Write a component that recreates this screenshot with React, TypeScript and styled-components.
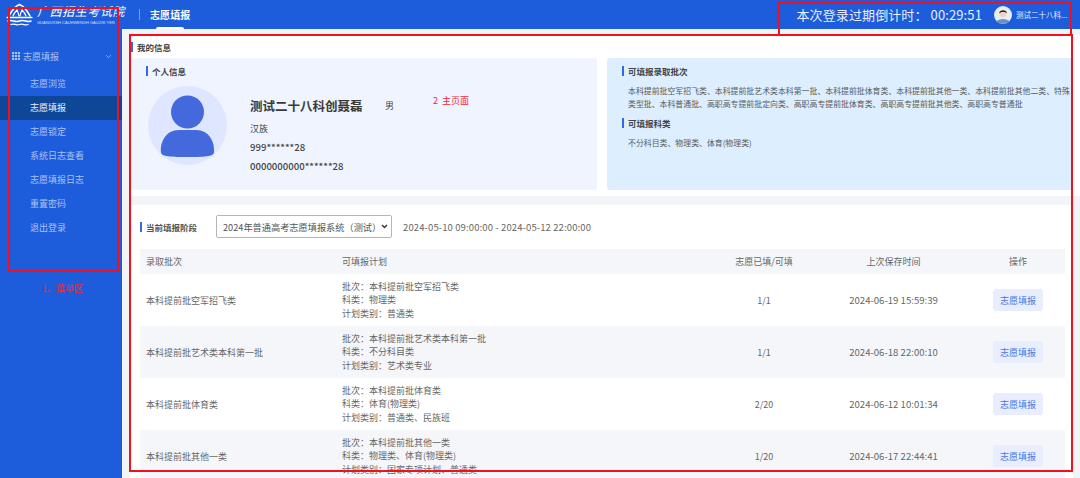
import React from 'react';
import styled, { createGlobalStyle } from 'styled-components';
import { ChevronDown } from 'lucide-react';

const GlobalStyle = createGlobalStyle`
  html, body {
    margin: 0;
    padding: 0;
    height: 478px;
    overflow: hidden;
    background: #fff;
  }
  * {
    box-sizing: border-box;
  }
`;

const selectArrow =
  "url(\"data:image/svg+xml,%3Csvg xmlns='http://www.w3.org/2000/svg' width='7' height='5' viewBox='0 0 7 5'%3E%3Cpath d='M1 1l2.5 2.5L6 1' fill='none' stroke='%23333' stroke-width='1.4'/%3E%3C/svg%3E\")";

const Page = styled.div`
  position: relative;
  width: 1080px;
  height: 478px;
  overflow: hidden;
  font-family: 'Noto Sans CJK SC', 'Noto Sans', sans-serif;
  font-size: 9px;
  color: #555;
`;

const Header = styled.header`
  display: flex;
  align-items: center;
  height: 29px;
  background: #1d5cdb;
  color: #fff;
`;

const Brand = styled.div`
  display: flex;
  align-items: center;
  width: 133px;
  padding-left: 6px;
  column-gap: 4px;
`;

const BrandText = styled.div`
  display: flex;
  flex-direction: column;
  line-height: 1;
`;

const BrandName = styled.div`
  font-family: 'Liberation Serif', 'Noto Sans CJK SC', serif;
  font-size: 12px;
  font-style: italic;
  letter-spacing: 0.6px;
  line-height: 16px;
  white-space: nowrap;
`;

const BrandEn = styled.div`
  font-family: 'Liberation Sans', sans-serif;
  font-size: 4px;
  line-height: 6px;
  opacity: 0.8;
  white-space: nowrap;
`;

const Divider = styled.div`
  width: 1px;
  height: 11px;
  margin: 0 10px 0 6px;
  background: rgba(255, 255, 255, 0.4);
`;

const HeaderTab = styled.div`
  position: relative;
  height: 29px;
  line-height: 29px;
  font-size: 10px;
  font-weight: 700;
  letter-spacing: 0.1px;

  &::after {
    content: '';
    position: absolute;
    left: 6px;
    right: 6px;
    bottom: 0;
    height: 2px;
    border-radius: 2px 2px 0 0;
    background: #fff;
  }
`;

const HeaderRight = styled.div`
  display: flex;
  align-items: center;
  margin-left: auto;
  padding-right: 10px;
`;

const Countdown = styled.div`
  font-size: 13px;
  letter-spacing: 0.11px;
  line-height: 29px;
  color: #e6eeff;
  white-space: nowrap;
`;

const UserName = styled.div`
  width: 54px;
  font-size: 7.5px;
  color: #e6eeff;
  white-space: nowrap;
`;

const HeaderAvatar = styled.svg`
  width: 18px;
  height: 18px;
  margin: 0 4px 0 12px;
`;

const Body = styled.div`
  display: flex;
  height: 449px;
`;

const Sidebar = styled.aside`
  flex: none;
  width: 122px;
  padding-top: 19px;
  background: #1d5cdb;
  color: #a9c3f5;
`;

const MenuGroup = styled.div`
  display: flex;
  align-items: center;
  height: 16px;
  padding: 0 9px 0 12px;
  margin-bottom: 8px;
  column-gap: 3px;
`;

const MenuGroupArrow = styled(ChevronDown)`
  margin-left: auto;
`;

const MenuItem = styled.div<{ $active?: boolean }>`
  height: 24px;
  line-height: 24px;
  padding-left: 30px;
  color: ${(props) => (props.$active ? '#e8f0ff' : '#a9c3f5')};
  background: ${(props) => (props.$active ? '#0e4698' : 'transparent')};
`;

const Content = styled.main`
  flex: 1;
  min-width: 0;
  padding: 6px 0 0 8px;
  background: #f2f4f8;
`;

const InfoCard = styled.section`
  height: 161px;
  padding-left: 1px;
  background: #fff;
`;

const CardTitleRow = styled.div`
  height: 23px;
  display: flex;
  align-items: center;
  padding-top: 1px;
`;

const Tick = styled.span<{ $height?: number }>`
  flex: none;
  width: 2px;
  height: ${(props) => props.$height || 10}px;
  background: #2f6be6;
`;

const CardTitle = styled.span`
  margin-left: 4px;
  font-size: 8.5px;
  font-weight: 700;
  color: #444;
`;

const Panels = styled.div`
  display: flex;
  width: 942px;
  column-gap: 10px;
  overflow: hidden;
`;

const PersonPanel = styled.div`
  flex: none;
  width: 466px;
  height: 132px;
  padding: 8px 0 0 15px;
  border-radius: 3px;
  background: #f0f4ff;
`;

const ScopePanel = styled.div`
  flex: 1;
  min-width: 0;
  height: 132px;
  padding: 8px 0 0 15px;
  border-radius: 3px 0 0 3px;
  background: #ddeeff;
`;

const PanelHeading = styled.div`
  display: flex;
  align-items: center;
  height: 10px;
  column-gap: 4px;
  font-size: 8.5px;
  font-weight: 700;
  color: #444;
`;

const PersonRow = styled.div`
  display: flex;
  margin-top: 10px;
  margin-left: 2px;
`;

const Portrait = styled.div`
  flex: none;
  width: 79px;
  height: 79px;
  border-radius: 50%;
  background: #dfe6ff;
`;

const PortraitIcon = styled.svg`
  display: block;
  width: 79px;
  height: 79px;
`;

const PersonText = styled.div`
  margin-left: 23px;
  padding-top: 7px;
`;

const NameRow = styled.div`
  display: flex;
  align-items: center;
  height: 24px;
  margin-bottom: 2px;
`;

const PersonName = styled.div`
  width: 135px;
  font-size: 12.5px;
  font-weight: 700;
  color: #3a3a3a;
  white-space: nowrap;
`;

const Gender = styled.div`
  font-size: 9px;
  color: #444;
`;

const PersonLine = styled.div<{ $strong?: boolean }>`
  height: 19px;
  line-height: 19px;
  font-size: ${(props) => (props.$strong ? 9.6 : 9)}px;
  font-weight: ${(props) => (props.$strong ? 500 : 400)};
  color: #444;
`;

const ScopeText = styled.p`
  width: 445px;
  margin: 8px 0 8px 6px;
  font-size: 7.9px;
  line-height: 13px;
  color: #5a5a5a;
`;

const PlanCard = styled.section`
  height: 273px;
  margin: 9px 7px 0 0;
  padding: 10px 8px 0 10px;
  background: #fff;
  overflow: hidden;
`;

const StageRow = styled.div`
  display: flex;
  align-items: center;
  height: 23px;
`;

const StageLabel = styled.span`
  width: 70px;
  margin-left: 4px;
  font-size: 8.5px;
  font-weight: 700;
  color: #555;
`;

const StageSelect = styled.select`
  appearance: none;
  width: 176px;
  height: 23px;
  padding: 0 0 0 6px;
  border: 1px solid #b5b5b5;
  border-radius: 2px;
  background: #fff ${selectArrow} no-repeat right 3px center;
  font-family: inherit;
  font-size: 9.2px;
  color: #555;
`;

const StageDates = styled.span`
  margin-left: 11px;
  font-size: 9.5px;
  letter-spacing: 0.12px;
  color: #666;
`;

const Table = styled.div`
  margin-top: 11px;
`;

const Row = styled.div<{ $stripe?: boolean; $head?: boolean }>`
  display: grid;
  grid-template-columns: 196px 370px 104px 155px 1fr;
  align-items: center;
  height: ${(props) => (props.$head ? 25 : 52)}px;
  padding-left: 6px;
  background: ${(props) => (props.$stripe ? '#f5f6fa' : '#fff')};
  color: #666;
`;

const PlanLines = styled.div`
  line-height: 13.6px;
`;

const CenterCell = styled.div`
  text-align: center;
  white-space: nowrap;
`;

const TimeCell = styled(CenterCell)`
  font-size: 9.6px;
`;

const FillButton = styled.button`
  display: block;
  width: 50px;
  height: 22px;
  margin: 0 auto;
  padding: 0;
  border: 0;
  border-radius: 3px;
  background: #e8eeff;
  font-family: inherit;
  font-size: 9px;
  color: #4a78e0;
`;

const RedBox = styled.div<{ $x: number; $y: number; $w: number; $h: number }>`
  position: absolute;
  left: ${(props) => props.$x}px;
  top: ${(props) => props.$y}px;
  width: ${(props) => props.$w}px;
  height: ${(props) => props.$h}px;
  border: 2px solid #f01020;
  pointer-events: none;
`;

const RedNote = styled.div<{ $x: number; $y: number }>`
  position: absolute;
  left: ${(props) => props.$x}px;
  top: ${(props) => props.$y}px;
  font-size: 9px;
  line-height: 12px;
  color: #ef2b3c;
  white-space: pre;
`;

const menu = ['志愿浏览', '志愿填报', '志愿锁定', '系统日志查看', '志愿填报日志', '重置密码', '退出登录'];

const rows = [
  {
    batch: '本科提前批空军招飞类',
    plan: ['批次：本科提前批空军招飞类', '科类：物理类', '计划类别：普通类'],
    count: '1/1',
    saved: '2024-06-19 15:59:39',
  },
  {
    batch: '本科提前批艺术类本科第一批',
    plan: ['批次：本科提前批艺术类本科第一批', '科类：不分科目类', '计划类别：艺术类专业'],
    count: '1/1',
    saved: '2024-06-18 22:00:10',
  },
  {
    batch: '本科提前批体育类',
    plan: ['批次：本科提前批体育类', '科类：体育(物理类)', '计划类别：普通类、民族班'],
    count: '2/20',
    saved: '2024-06-12 10:01:34',
  },
  {
    batch: '本科提前批其他一类',
    plan: ['批次：本科提前批其他一类', '科类：物理类、体育(物理类)', '计划类别：国家专项计划、普通类'],
    count: '1/20',
    saved: '2024-06-17 22:44:41',
  },
];

function Emblem() {
  return (
    <svg width="27" height="24" viewBox="0 0 27 24" fill="none" stroke="#fff" strokeLinecap="round">
      <path d="M3 13 C6 7 10 3 13.5 1.5 C17 3 21 7 24 13" strokeWidth="1.6" />
      <path d="M7 13 C8 10 10 8 11 7 C12 9 12.6 11 13 13 M14 13 C14.4 11 15 9 16 7 C17 8 19 10 20 13" strokeWidth="1.1" />
      <path d="M1 14.5 H26" strokeWidth="1.3" />
      <path d="M2 18 C6 16 9 20 13.5 18 C18 16 21 20 25 18" strokeWidth="1.5" />
      <path d="M5 21.5 C8 20 10 23 13.5 21.5 C17 20 19 23 22 21.5" strokeWidth="1.3" />
    </svg>
  );
}

function GridIcon() {
  const cells = [0, 3, 6];
  return (
    <svg width="8" height="8" viewBox="0 0 8 8" fill="#a9c3f5">
      {cells.map((y) => cells.map((x) => <rect key={`${x}-${y}`} x={x} y={y} width="2.2" height="2.2" />))}
    </svg>
  );
}

export default function App() {
  return (
    <Page>
      <GlobalStyle />
      <Header>
        <Brand>
          <Emblem />
          <BrandText>
            <BrandName>广西招生考试院</BrandName>
            <BrandEn>GUANGXISH CAUHWENGH GAUJISI YEN</BrandEn>
          </BrandText>
        </Brand>
        <Divider />
        <HeaderTab>志愿填报</HeaderTab>
        <HeaderRight>
          <Countdown>本次登录过期倒计时：&nbsp;00:29:51</Countdown>
          <HeaderAvatar viewBox="0 0 18 18">
            <circle cx="9" cy="9" r="9" fill="#e9eef6" />
            <path d="M2.5 15.5 C4 12 14 12 15.5 15.5 C13.5 18.6 4.5 18.6 2.5 15.5 Z" fill="#6f8fbf" />
            <circle cx="9" cy="7.6" r="3.6" fill="#f1d5c2" />
            <path d="M5.2 7.4 C4.8 3.4 13.2 3.2 12.8 7.2 C11 5.6 7.4 5.6 5.2 7.4 Z" fill="#2b2f3a" />
          </HeaderAvatar>
          <UserName>测试二十八科...</UserName>
        </HeaderRight>
      </Header>
      <Body>
        <Sidebar>
          <MenuGroup>
            <GridIcon />
            志愿填报
            <MenuGroupArrow size={9} />
          </MenuGroup>
          {menu.map((item, index) => (
            <MenuItem key={item} $active={index === 1}>
              {item}
            </MenuItem>
          ))}
        </Sidebar>
        <Content>
          <InfoCard>
            <CardTitleRow>
              <Tick />
              <CardTitle>我的信息</CardTitle>
            </CardTitleRow>
            <Panels>
              <PersonPanel>
                <PanelHeading>
                  <Tick />
                  个人信息
                </PanelHeading>
                <PersonRow>
                  <Portrait>
                    <PortraitIcon viewBox="0 0 79 79">
                      <circle cx="39.5" cy="26" r="16.5" fill="#4469dc" />
                      <path
                        d="M13 66 C12 56 18 44 31 44 H48 C61 44 67 56 66 66 C66 70 60 71 39.5 71 C19 71 13 70 13 66 Z"
                        fill="#4469dc"
                      />
                    </PortraitIcon>
                  </Portrait>
                  <PersonText>
                    <NameRow>
                      <PersonName>测试二十八科创聂磊</PersonName>
                      <Gender>男</Gender>
                    </NameRow>
                    <PersonLine>汉族</PersonLine>
                    <PersonLine $strong>999******28</PersonLine>
                    <PersonLine $strong>0000000000******28</PersonLine>
                  </PersonText>
                </PersonRow>
              </PersonPanel>
              <ScopePanel>
                <PanelHeading>
                  <Tick />
                  可填报录取批次
                </PanelHeading>
                <ScopeText>
                  本科提前批空军招飞类、本科提前批艺术类本科第一批、本科提前批体育类、本科提前批其他一类、本科提前批其他二类、特殊类型批、本科普通批、高职高专提前批定向类、高职高专提前批体育类、高职高专提前批其他类、高职高专普通批
                </ScopeText>
                <PanelHeading>
                  <Tick />
                  可填报科类
                </PanelHeading>
                <ScopeText>不分科目类、物理类、体育(物理类)</ScopeText>
              </ScopePanel>
            </Panels>
          </InfoCard>
          <PlanCard>
            <StageRow>
              <Tick />
              <StageLabel>当前填报阶段</StageLabel>
              <StageSelect defaultValue="2024">
                <option value="2024">2024年普通高考志愿填报系统（测试）</option>
              </StageSelect>
              <StageDates>2024-05-10 09:00:00 - 2024-05-12 22:00:00</StageDates>
            </StageRow>
            <Table>
              <Row $head $stripe>
                <div>录取批次</div>
                <div>可填报计划</div>
                <CenterCell>志愿已填/可填</CenterCell>
                <CenterCell>上次保存时间</CenterCell>
                <CenterCell>操作</CenterCell>
              </Row>
              {rows.map((row, index) => (
                <Row key={row.batch} $stripe={index % 2 === 1}>
                  <div>{row.batch}</div>
                  <PlanLines>
                    {row.plan.map((line) => (
                      <div key={line}>{line}</div>
                    ))}
                  </PlanLines>
                  <CenterCell>{row.count}</CenterCell>
                  <TimeCell>{row.saved}</TimeCell>
                  <FillButton>志愿填报</FillButton>
                </Row>
              ))}
            </Table>
          </PlanCard>
        </Content>
      </Body>
      <RedBox $x={8} $y={7} $w={111} $h={265} />
      <RedBox $x={129} $y={34} $w={944} $h={438} />
      <RedBox $x={778} $y={2} $w={294} $h={34} />
      <RedNote $x={42} $y={283}>1、菜单区</RedNote>
      <RedNote $x={433} $y={95}>2  主页面</RedNote>
    </Page>
  );
}
